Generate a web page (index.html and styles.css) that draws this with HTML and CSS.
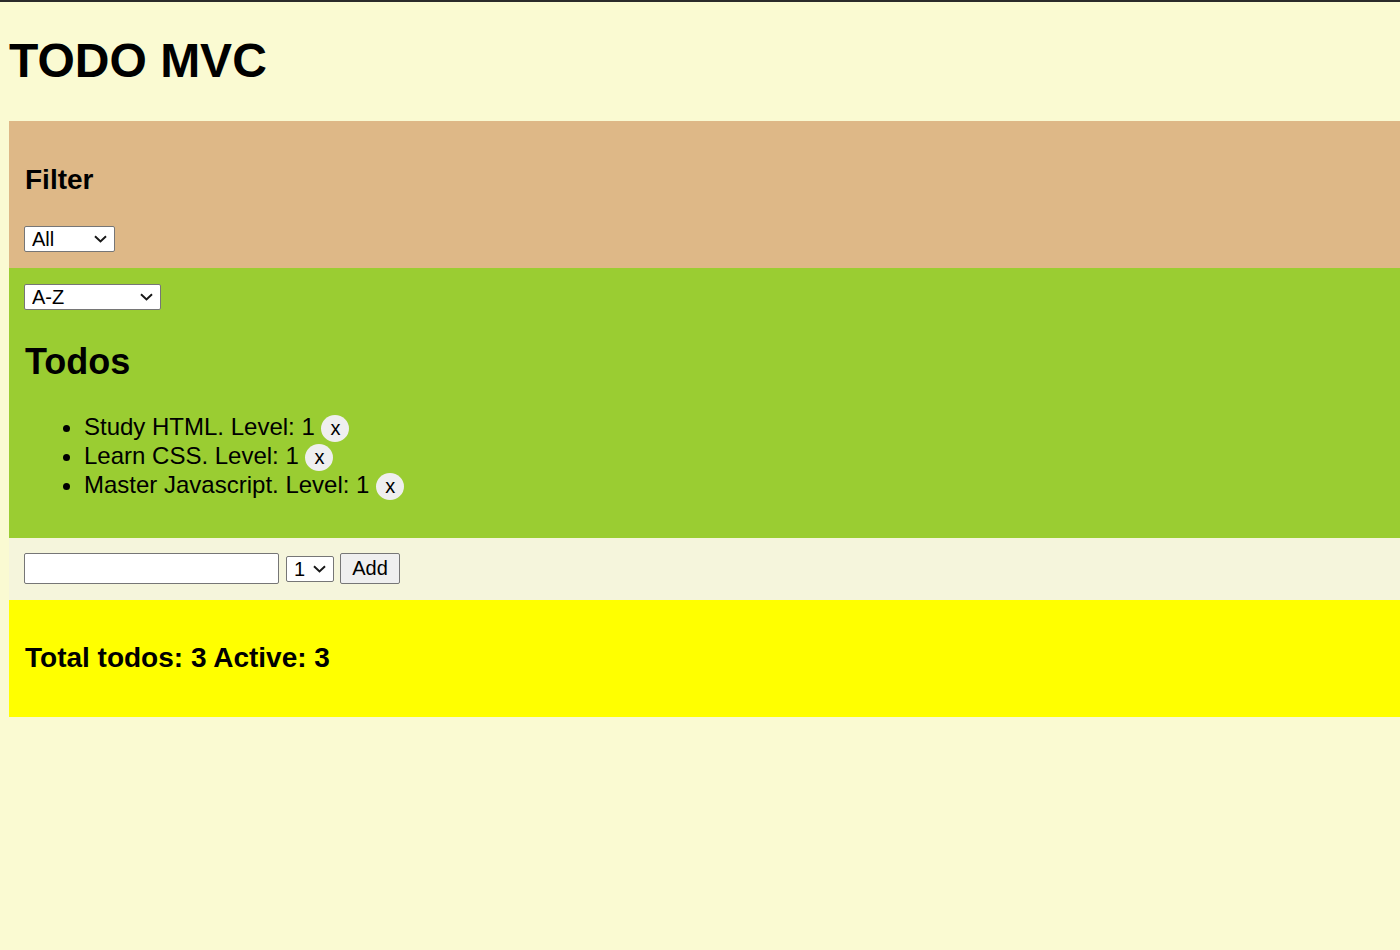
FILE: index.html
```html
<!DOCTYPE html>
<html lang="en">
<head>
<meta charset="utf-8">
<title>TODO MVC</title>
<link rel="stylesheet" href="styles.css">
</head>
<body>
  <h1 class="title">TODO MVC</h1>
  <section class="panel filter">
    <h3 class="panel-heading">Filter</h3>
    <select class="ctl select-filter">
      <option>All</option>
      <option>Active</option>
      <option>Completed</option>
    </select>
  </section>
  <section class="panel todos">
    <select class="ctl select-sort">
      <option>A-Z</option>
      <option>Z-A</option>
    </select>
    <h2 class="todos-heading">Todos</h2>
    <ul class="todo-list">
      <li>Study HTML. Level: 1 <button class="remove">x</button></li>
      <li>Learn CSS. Level: 1 <button class="remove">x</button></li>
      <li>Master Javascript. Level: 1 <button class="remove">x</button></li>
    </ul>
  </section>
  <section class="panel add">
    <input class="ctl text-input" type="text">
    <select class="ctl select-level">
      <option>1</option>
      <option>2</option>
      <option>3</option>
    </select>
    <button class="ctl add-btn">Add</button>
  </section>
  <section class="panel stats">
    <h3 class="panel-heading">Total todos: 3 Active: 3</h3>
  </section>
</body>
</html>
```
FILE: styles.css
```css
html {
  background: #fafad2;
  border-top: 2px solid #2b2b2b;
}

body {
  margin: 0;
  padding: 0 0 0 9px;
  font-family: "Liberation Sans", Arial, sans-serif;
  font-size: 24px;
  color: #000;
}

.title {
  font-size: 48px;
  font-weight: bold;
  margin: 31px 0 33px 0;
}

.panel {
  padding: 13px 15px 16px 15px;
}

.panel-heading {
  font-size: 28px;
  font-weight: bold;
  margin: 28px 0;
}

.filter {
  background: #deb887;
}

.filter .panel-heading {
  margin: 30px 0 30px 1px;
}

.ctl {
  font-family: "Liberation Sans", Arial, sans-serif;
  font-size: 20px;
  color: #000;
  box-sizing: border-box;
}

select.ctl {
  display: block;
  height: 26px;
  -webkit-appearance: none;
  appearance: none;
  background-color: #fff;
  background-image: url("data:image/svg+xml,%3Csvg xmlns='http://www.w3.org/2000/svg' width='13' height='8' viewBox='0 0 13 8'%3E%3Cpath d='M1 1.2 L6.5 6.4 L12 1.2' fill='none' stroke='%23181818' stroke-width='2'/%3E%3C/svg%3E");
  background-repeat: no-repeat;
  background-position: right 7px center;
  background-size: 13px 8px;
  border: 1px solid #767676;
  border-radius: 2px;
  padding: 0 0 0 7px;
}

.select-filter {
  width: 91px;
}

.todos {
  background: #9acd32;
  padding-top: 16px;
}

.select-sort {
  width: 137px;
}

.todos-heading {
  font-size: 36px;
  font-weight: bold;
  margin: 31px 0 30px 1px;
}

.todo-list {
  margin: 0 0 22px 0;
  padding-left: 60px;
}

.remove {
  font-family: "Liberation Sans", Arial, sans-serif;
  font-size: 20px;
  color: #000;
  background: #efefef;
  border: none;
  border-radius: 50%;
  padding: 2px 9px;
  height: 27px;
  width: 28px;
  line-height: 23px;
}

.add {
  background: #f5f5dc;
  padding-top: 15px;
  padding-bottom: 16px;
  display: flex;
  align-items: center;
}

.text-input {
  width: 255px;
  height: 31px;
  background: #fff;
  border: 1px solid #767676;
  border-radius: 2px;
  margin-right: 7px;
}

.add select.ctl.select-level {
  width: 48px;
  margin-right: 6px;
}

.add-btn {
  width: 60px;
  height: 31px;
  background: #efefef;
  border: 1px solid #767676;
  border-radius: 2px;
  padding: 0;
}

.stats {
  background: #ffff00;
}

.stats .panel-heading {
  margin: 29px 0 27px 1px;
}
```
